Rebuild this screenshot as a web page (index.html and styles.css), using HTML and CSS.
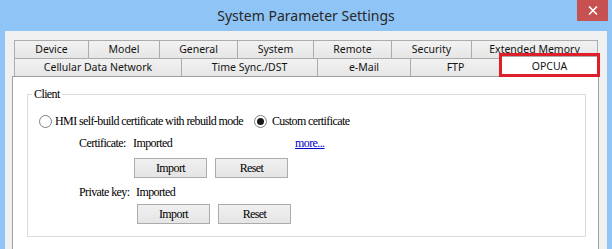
FILE: index.html
```html
<!DOCTYPE html>
<html lang="en">
	<head>
		<meta charset="UTF-8" />
		<meta name="viewport" content="width=device-width, initial-scale=1.0" />
		<title>System Parameter Settings</title>
		<link rel="stylesheet" href="styles.css">
	</head>
	<body>
		<div class="window">
			<div class="titlebar">
				<span></span>
				<h1 class="title">System Parameter Settings</h1>
				<button class="close" aria-label="Close">
					<svg width="10" height="9" viewBox="0 0 10 9">
						<path d="M1 0.5 L9 8.5 M9 0.5 L1 8.5" stroke="#ffffff" stroke-width="1.6" fill="none" />
					</svg>
				</button>
			</div>
			<div class="client">
				<div class="tabs">
					<div class="tab-row row-top">
						<div class="tab first">Device</div>
						<div class="tab">Model</div>
						<div class="tab">General</div>
						<div class="tab">System</div>
						<div class="tab">Remote</div>
						<div class="tab">Security</div>
						<div class="tab">Extended Memory</div>
					</div>
					<div class="tab-row row-bottom">
						<div class="tab first">Cellular Data Network</div>
						<div class="tab">Time Sync./DST</div>
						<div class="tab">e-Mail</div>
						<div class="tab">FTP</div>
						<div class="tab active">OPCUA</div>
					</div>
				</div>
				<div class="panel">
					<fieldset class="group">
						<legend>Client</legend>
						<div class="radios">
							<label class="option">
								<span class="radio"></span>
								<span>HMI self-build certificate with rebuild mode</span>
							</label>
							<label class="option second">
								<span class="radio checked"></span>
								<span>Custom certificate</span>
							</label>
						</div>
						<div class="field cert-row">
							<span class="label cert-label">Certificate:</span>
							<span class="value cert-value">Imported</span>
							<a class="more" href="#">more...</a>
						</div>
						<div class="buttons first-buttons">
							<button class="btn">Import</button>
							<button class="btn">Reset</button>
						</div>
						<div class="field key-row">
							<span class="label key-label">Private key:</span>
							<span class="value">Imported</span>
						</div>
						<div class="buttons second-buttons">
							<button class="btn">Import</button>
							<button class="btn">Reset</button>
						</div>
					</fieldset>
				</div>
			</div>
		</div>
	</body>
</html>
```

FILE: styles.css
```css
* {
	margin: 0;
	padding: 0;
	box-sizing: border-box;
}
body {
	width: 612px;
	height: 249px;
	overflow: hidden;
	background-color: rgb(143, 196, 246);
}
.window {
	height: 249px;
	padding: 0 5px;
	display: flex;
	flex-direction: column;
	background-color: rgb(143, 196, 246);
}
.titlebar {
	height: 31px;
	margin: 0 -5px;
	display: grid;
	grid-template-columns: 1fr auto 1fr;
}
.title {
	align-self: center;
	padding-bottom: 1px;
	font-family: "Noto Sans", sans-serif;
	font-weight: 400;
	font-size: 14px;
	color: rgb(40, 40, 40);
}
.close {
	justify-self: end;
	align-self: start;
	width: 31px;
	height: 21px;
	margin-right: 4px;
	border: none;
	background-color: rgb(199, 80, 80);
	display: flex;
	align-items: center;
	justify-content: center;
}
.client {
	flex: 1;
	padding: 9px 8px 0 7px;
	background-color: rgb(240, 240, 240);
	display: flex;
	flex-direction: column;
}
.tabs {
	margin-left: 2px;
	width: 584px;
}
.tab-row {
	display: grid;
	height: 18px;
}
.row-top {
	grid-template-columns: 75px 71px 78px 76px 78px 80px 1fr;
}
.row-bottom {
	grid-template-columns: 168px 136px 93px 90px 1fr;
}
.tab {
	border-top: 1px solid rgb(172, 172, 172);
	border-right: 1px solid rgb(172, 172, 172);
	background: linear-gradient(rgb(242, 242, 242), rgb(230, 230, 230));
	font-family: "Noto Sans", sans-serif;
	font-size: 10.5px;
	line-height: 16px;
	text-align: center;
	color: rgb(20, 20, 20);
	white-space: nowrap;
}
.tab.first {
	border-left: 1px solid rgb(172, 172, 172);
}
.tab.active {
	position: relative;
	z-index: 1;
	margin: -2px -2px -1px -2px;
	border-left: 1px solid rgb(172, 172, 172);
	background: rgb(255, 255, 255);
	line-height: 19px;
}
.tab.active::after {
	content: "";
	position: absolute;
	top: -4px;
	left: -1px;
	right: -1px;
	bottom: 0;
	border: 3px solid rgb(222, 30, 40);
}
.panel {
	flex: 1;
	width: 587px;
	border: 1px solid rgb(160, 160, 160);
	border-bottom: none;
	background-color: rgb(255, 255, 255);
	padding: 0 12px 0 14px;
	font-family: "Liberation Serif", serif;
	font-size: 12px;
	letter-spacing: -0.6px;
	color: rgb(0, 0, 0);
}
.group {
	margin-top: 10px;
	padding: 0 0 12px 0;
	border: 1px solid rgb(220, 220, 220);
}
.group > legend {
	margin-left: 4px;
	padding: 0 2px;
	line-height: 14px;
}
.radios {
	margin: 12px 0 0 11px;
	height: 16px;
	display: flex;
	align-items: center;
}
.option {
	display: flex;
	align-items: center;
	gap: 3px;
}
.option.second {
	margin-left: 11px;
	gap: 5px;
}
.radio {
	width: 13px;
	height: 13px;
	border: 1px solid rgb(128, 128, 128);
	border-radius: 50%;
	background-color: rgb(255, 255, 255);
	display: flex;
	align-items: center;
	justify-content: center;
}
.radio.checked::after {
	content: "";
	width: 7px;
	height: 7px;
	border-radius: 50%;
	background-color: rgb(25, 25, 25);
}
.field {
	display: flex;
	height: 16px;
	align-items: center;
	margin-left: 51px;
}
.cert-row {
	margin-top: 6px;
}
.key-row {
	margin-top: 6px;
}
.cert-label {
	width: 54px;
}
.key-label {
	width: 57px;
}
.cert-value {
	width: 162px;
}
.more {
	color: rgb(0, 0, 204);
}
.buttons {
	display: flex;
	gap: 8px;
}
.first-buttons {
	margin: 7px 0 0 106px;
}
.second-buttons {
	margin: 4px 0 0 109px;
}
.btn {
	width: 73px;
	height: 20px;
	border: 1px solid rgb(172, 172, 172);
	background: linear-gradient(rgb(240, 240, 240), rgb(229, 229, 229));
	font-family: "Liberation Serif", serif;
	font-size: 12px;
	letter-spacing: -0.6px;
	color: rgb(0, 0, 0);
}
```
